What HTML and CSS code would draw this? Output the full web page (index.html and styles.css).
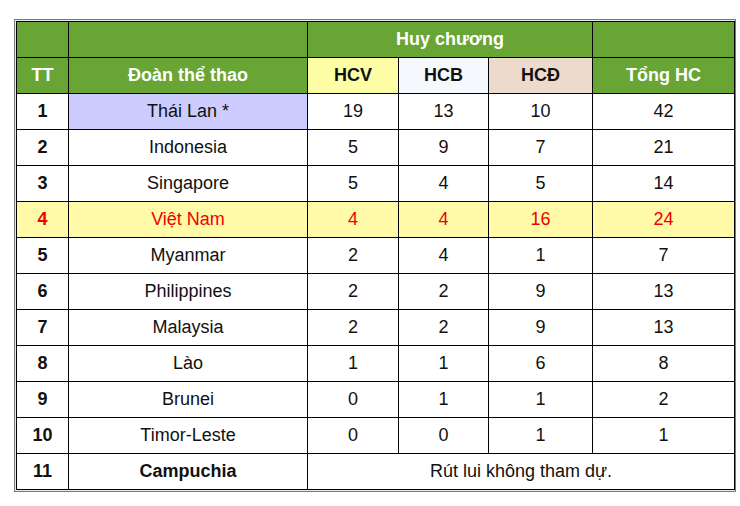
FILE: index.html
```html
<!DOCTYPE html>
<html lang="vi">
<head>
<meta charset="utf-8">
<link rel="stylesheet" href="styles.css">
</head>
<body>
<div class="frame">
<table class="medals">
  <colgroup>
    <col class="c-tt"><col class="c-name"><col class="c-hcv"><col class="c-hcb"><col class="c-hcd"><col class="c-total">
  </colgroup>
  <thead>
    <tr class="hrow">
      <th></th><th></th><th colspan="3">Huy chương</th><th></th>
    </tr>
    <tr class="hrow">
      <th>TT</th><th>Đoàn thể thao</th><th class="hcv">HCV</th><th class="hcb">HCB</th><th class="hcd">HCĐ</th><th>Tổng HC</th>
    </tr>
  </thead>
  <tbody>
    <tr><td class="tt">1</td><td class="host">Thái Lan *</td><td>19</td><td>13</td><td>10</td><td>42</td></tr>
    <tr><td class="tt">2</td><td>Indonesia</td><td>5</td><td>9</td><td>7</td><td>21</td></tr>
    <tr><td class="tt">3</td><td>Singapore</td><td>5</td><td>4</td><td>5</td><td>14</td></tr>
    <tr class="vn"><td class="tt">4</td><td>Việt Nam</td><td>4</td><td>4</td><td>16</td><td>24</td></tr>
    <tr><td class="tt">5</td><td>Myanmar</td><td>2</td><td>4</td><td>1</td><td>7</td></tr>
    <tr><td class="tt">6</td><td>Philippines</td><td>2</td><td>2</td><td>9</td><td>13</td></tr>
    <tr><td class="tt">7</td><td>Malaysia</td><td>2</td><td>2</td><td>9</td><td>13</td></tr>
    <tr><td class="tt">8</td><td>Lào</td><td>1</td><td>1</td><td>6</td><td>8</td></tr>
    <tr><td class="tt">9</td><td>Brunei</td><td>0</td><td>1</td><td>1</td><td>2</td></tr>
    <tr><td class="tt">10</td><td>Timor-Leste</td><td>0</td><td>0</td><td>1</td><td>1</td></tr>
    <tr><td class="tt">11</td><td class="bold">Campuchia</td><td colspan="4">Rút lui không tham dự.</td></tr>
  </tbody>
</table>
</div>
</body>
</html>
```

FILE: styles.css
```css
html, body {
  margin: 0;
  padding: 0;
  background: #ffffff;
}
body {
  padding: 19px 0 0 14px;
  font-family: "Liberation Sans", Arial, sans-serif;
}
.frame {
  width: 718px;
  border: 1px solid #7a7a7a;
  padding: 1px;
  box-shadow: inset 0 0 0 1px #e8e8e8;
}
.medals {
  border-collapse: collapse;
  width: 718px;
  table-layout: fixed;
}
.c-tt { width: 52px; }
.c-name { width: 239px; }
.c-hcv { width: 91px; }
.c-hcb { width: 90px; }
.c-hcd { width: 104px; }
.c-total { width: 142px; }
.medals th, .medals td {
  border: 1px solid #000000;
  text-align: center;
  padding: 0;
  font-size: 18px;
  color: #111;
}
.medals th {
  background: #69a535;
  color: #ffffff;
  font-weight: bold;
  height: 35px;
}
.medals td {
  height: 35px;
}
.medals th.hcv { background: #fefea6; color: #111; }
.medals th.hcb { background: #f5f8fc; color: #111; }
.medals th.hcd { background: #ecdbcc; color: #111; }
.medals td.tt { font-weight: bold; }
.medals td.host { background: #ccccff; }
.medals td.bold { font-weight: bold; }
.medals tr.vn td {
  background: #fefaa8;
  color: #f00000;
}
```
